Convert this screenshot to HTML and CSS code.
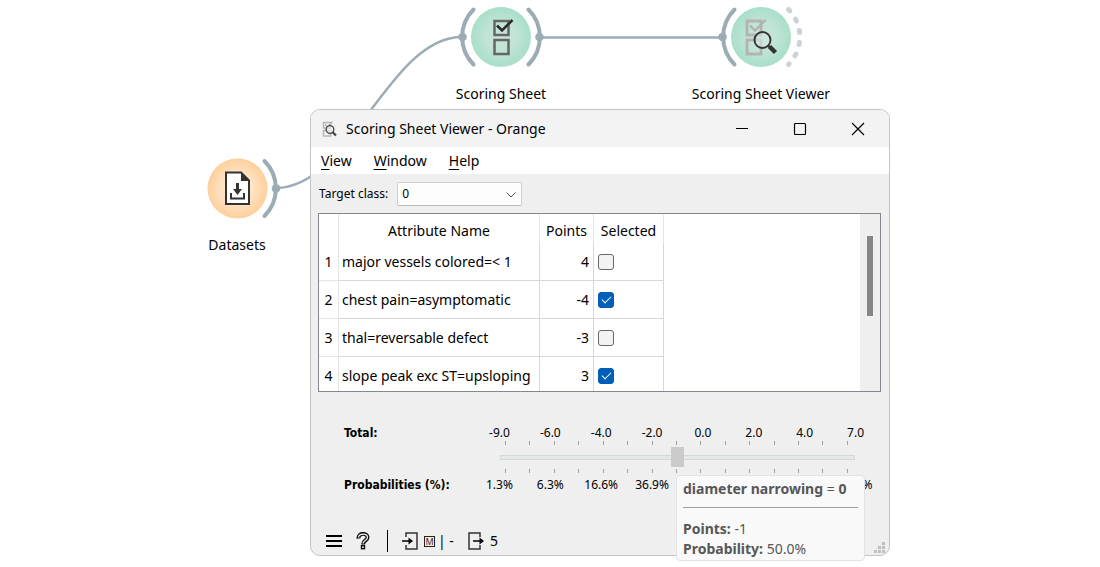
FILE: index.html
```html
<!DOCTYPE html>
<html lang="en">
<head>
<meta charset="utf-8">
<title>Scoring Sheet Viewer - Orange</title>
<link rel="stylesheet" href="styles.css">
</head>
<body>
<main class="canvas">
  <svg class="links" aria-hidden="true">
    <path d="M276 188C350 188 388 37 462 37"/>
    <path d="M540 37.500H722"/>
  </svg>

  <div class="node node-datasets">
    <svg class="node-art" viewBox="0 0 88 74" aria-hidden="true">
      <defs>
        <radialGradient id="orange"><stop offset="0" stop-color="#ffeedd"/><stop offset=".5" stop-color="#ffe3c5"/><stop offset="1" stop-color="#ffcf9b"/></radialGradient>
      </defs>
      <circle cx="44.500" cy="37.500" r="30" fill="url(#orange)"/>
      <path class="arc" d="M71.500 10A39 39 0 0 1 71.500 65"/>
      <circle class="anchor" cx="83" cy="37.500" r="4.300"/>
      <path d="M33 21.500H48L56 29.500V53H33Z" fill="#fff" stroke="#333" stroke-width="2"/>
      <path d="M48 20.500V30H57Z" fill="#333"/>
      <path d="M44.500 32V39" stroke="#333" stroke-width="3"/>
      <path d="M40 38H49L44.500 44Z" fill="#333"/>
      <path d="M38 42V47.500H51V42" fill="none" stroke="#333" stroke-width="2"/>
    </svg>
    <span class="node-label">Datasets</span>
  </div>

  <div class="node node-sheet">
    <svg class="node-art" viewBox="0 0 88 74" aria-hidden="true">
      <defs>
        <radialGradient id="green"><stop offset="0" stop-color="#cbe5da"/><stop offset=".5" stop-color="#c0e4d5"/><stop offset="1" stop-color="#a8dfc9"/></radialGradient>
      </defs>
      <circle cx="44" cy="37" r="30" fill="url(#green)"/>
      <path class="arc" d="M16.500 9.500A39 39 0 0 0 16.500 64.500M71.500 9.500A39 39 0 0 1 71.500 64.500"/>
      <circle class="anchor" cx="5.500" cy="37" r="4.300"/>
      <circle class="anchor" cx="82.500" cy="37" r="4.300"/>
      <path d="M37.500 21H51.500V35H37.500ZM37.500 40H51.500V54H37.500Z" fill="none" stroke="#666" stroke-width="2.500"/>
      <path d="M40 25.500L45 30.500L55.500 20" fill="none" stroke="#2b2b2b" stroke-width="2.600"/>
    </svg>
    <span class="node-label">Scoring Sheet</span>
  </div>

  <div class="node node-viewer">
    <svg class="node-art" viewBox="0 0 88 74" aria-hidden="true">
      <circle cx="44" cy="37" r="30" fill="url(#green)"/>
      <path class="arc" d="M17.500 9.500A39 39 0 0 0 17.500 64.500"/>
      <circle class="anchor" cx="5.500" cy="37" r="4.300"/>
      <path class="arc-open" d="M71.500 9.500A39 39 0 0 1 71.500 64.500"/>
      <path d="M30 21H44V35H30ZM30 40H44V54H30Z" fill="none" stroke="#b3b3b3" stroke-width="2.800"/>
      <path d="M33 25.500L38 30.500L48.500 20" fill="none" stroke="#b3b3b3" stroke-width="2.400"/>
      <circle cx="45.500" cy="40" r="8" fill="#d3e7df" fill-opacity=".6" stroke="#333" stroke-width="1.900"/>
      <path d="M51 45.500L53 47.500" stroke="#333" stroke-width="2"/>
      <path d="M52.500 46.500L58.500 52.500" stroke="#333" stroke-width="4.500"/>
    </svg>
    <span class="node-label">Scoring Sheet Viewer</span>
  </div>

  <section class="window" aria-label="Scoring Sheet Viewer - Orange">
    <header class="titlebar">
      <svg class="app-icon" viewBox="0 0 16 18" aria-hidden="true">
        <path d="M1.500 2.500H8.500V8H1.500ZM1.500 10.500H8.500V16H1.500Z" fill="none" stroke="#b8b8b8" stroke-width="1.600"/>
        <path d="M3 4.500L5.500 7L10.500 1.500" fill="none" stroke="#b0b0b0" stroke-width="1.200"/>
        <circle cx="8" cy="9.500" r="3.800" fill="#eee" fill-opacity=".7" stroke="#444" stroke-width="1.300"/>
        <path d="M10.500 12L14 15.500" stroke="#444" stroke-width="2.200"/>
      </svg>
      <h1 class="title">Scoring Sheet Viewer - Orange</h1>
      <div class="window-controls">
        <button class="window-button" type="button" aria-label="Minimize"><svg viewBox="0 0 12 12"><path d="M0 5.500H12"/></svg></button>
        <button class="window-button" type="button" aria-label="Maximize"><svg viewBox="0 0 12 12"><rect x=".5" y=".5" width="11" height="11" rx="1"/></svg></button>
        <button class="window-button" type="button" aria-label="Close"><svg viewBox="0 0 12 12"><path d="M0 0L12 12M12 0L0 12"/></svg></button>
      </div>
    </header>

    <nav class="menubar">
      <button class="menu-item" type="button"><u>V</u>iew</button>
      <button class="menu-item" type="button"><u>W</u>indow</button>
      <button class="menu-item" type="button"><u>H</u>elp</button>
    </nav>

    <div class="target-row">
      <label for="target">Target class:</label>
      <span class="select-wrap">
        <select id="target" class="target-select"><option>0</option><option>1</option></select>
        <svg class="chevron" viewBox="0 0 10 6" aria-hidden="true"><path d="M.5 .5L5 5L9.500 .5"/></svg>
      </span>
    </div>

    <div class="table-frame">
      <div class="table-view">
        <table class="sheet">
          <colgroup><col class="col-index"><col class="col-name"><col class="col-points"><col class="col-selected"></colgroup>
          <thead>
            <tr><th></th><th scope="col">Attribute Name</th><th scope="col">Points</th><th scope="col">Selected</th></tr>
          </thead>
          <tbody>
            <tr><th scope="row">1</th><td>major vessels colored=&lt; 1</td><td class="points">4</td><td><input class="check" type="checkbox" aria-label="Select major vessels colored"></td></tr>
            <tr><th scope="row">2</th><td>chest pain=asymptomatic</td><td class="points">-4</td><td><input class="check" type="checkbox" aria-label="Select chest pain" checked></td></tr>
            <tr><th scope="row">3</th><td>thal=reversable defect</td><td class="points">-3</td><td><input class="check" type="checkbox" aria-label="Select thal"></td></tr>
            <tr><th scope="row">4</th><td>slope peak exc ST=upsloping</td><td class="points">3</td><td><input class="check" type="checkbox" aria-label="Select slope peak exc ST" checked></td></tr>
          </tbody>
        </table>
      </div>
      <div class="scrollbar"><div class="scroll-thumb"></div></div>
    </div>

    <div class="score">
      <label class="score-label" for="total">Total:</label>
      <div class="scale"><span>-9.0</span><span>-6.0</span><span>-4.0</span><span>-2.0</span><span>0.0</span><span>2.0</span><span>4.0</span><span>7.0</span></div>
      <div class="slider-area">
        <div class="ticks"><i></i><i></i><i></i><i></i><i></i><i></i><i></i><i></i><i></i><i></i><i></i><i></i><i></i><i></i><i></i></div>
        <input id="total" class="slider" type="range" min="-9" max="7" value="-1">
        <div class="ticks"><i></i><i></i><i></i><i></i><i></i><i></i><i></i><i></i><i></i><i></i><i></i><i></i><i></i><i></i><i></i></div>
      </div>
      <span class="score-label">Probabilities (%):</span>
      <div class="scale"><span>1.3%</span><span>6.3%</span><span>16.6%</span><span>36.9%</span><span></span><span></span><span></span><span>98.7%</span></div>
    </div>

    <footer class="statusbar">
      <button class="status-button" type="button" aria-label="Menu"><svg width="16" height="14" viewBox="0 0 16 14"><path d="M0 2H16M0 7H16M0 12H16" stroke="#000" stroke-width="2"/></svg></button>
      <button class="status-button" type="button" aria-label="Help"><svg width="14" height="18" viewBox="0 0 14 18"><path d="M2.500 6.500C2 .5 11.500 .5 11.500 5.500C11.500 8.500 7 8.500 7 12.500" fill="none" stroke="#111" stroke-width="4"/><path d="M2.500 5.500C3 1 11.500 1 11.500 5.500C11.500 8.500 7 8.500 7 11.500" fill="none" stroke="#efefef" stroke-width="1.300"/><rect x="5.500" y="13.700" width="3" height="3" fill="#efefef" stroke="#111" stroke-width="1.400"/></svg></button>
      <span class="divider"></span>
      <button class="status-button" type="button" aria-label="Input"><svg width="16" height="18" viewBox="0 0 16 18"><path d="M4 5V1H15V17H4V13" fill="none" stroke="#333" stroke-width="1.500"/><path d="M0 9H8" stroke="#000" stroke-width="1.500"/><path d="M6.500 5.500L11 9L6.500 12.500Z"/></svg><span class="input-summary"><span class="model-badge">M</span><span>| -</span></span></button>
      <button class="status-button" type="button" aria-label="Output"><svg width="16" height="18" viewBox="0 0 16 18"><path d="M12 5V1H1V17H12V13" fill="none" stroke="#333" stroke-width="1.500"/><path d="M5 9H13" stroke="#000" stroke-width="1.500"/><path d="M11.500 5.500L16 9L11.500 12.500Z"/></svg><span>5</span></button>
      <svg class="grip" viewBox="0 0 11 11" aria-hidden="true"><path d="M8 0h3v3h-3zM4 4h3v3h-3zM8 4h3v3h-3zM0 8h3v3h-3zM4 8h3v3h-3zM8 8h3v3h-3z"/></svg>
    </footer>
  </section>

  <aside class="tooltip" role="tooltip">
    <p class="tooltip-title"><b>diameter narrowing</b> = <b>0</b></p>
    <p><b>Points:</b> -1</p>
    <p><b>Probability:</b> 50.0%</p>
  </aside>
</main>
</body>
</html>
```
FILE: styles.css
```css
* { box-sizing: border-box; }
body { margin: 0; background: #fff; color: #000; font: 14px/20px "Noto Sans", "Open Sans", sans-serif; }
button { border: 0; padding: 0; background: none; color: inherit; font: inherit; }
h1, p { margin: 0; font: inherit; }

.canvas { position: relative; min-height: 100vh; overflow: hidden; }
.links { position: absolute; inset: 0; width: 100%; height: 100%; fill: none; stroke: #9cacb5; stroke-width: 2.5px; }

/* Workflow nodes */
.node { position: absolute; width: 160px; display: flex; flex-direction: column; align-items: center; gap: 10px; }
.node-datasets { left: 157px; top: 151px; }
.node-sheet { left: 421px; top: 0; }
.node-viewer { left: 681px; top: 0; }
.node-art { width: 88px; height: 74px; }
.node-label { white-space: nowrap; }
.arc, .arc-open { fill: none; stroke: #9cacb5; stroke-width: 4px; stroke-linecap: round; }
.arc-open { stroke: #ccd3d8; stroke-dasharray: 2 10; stroke-width: 5px; }
.anchor { fill: #9cacb5; }

/* Window */
.window { position: absolute; left: 310px; top: 109px; width: 580px; border: 1px solid #c4c4c4; border-radius: 10px; background: #efefef; overflow: hidden; }
.titlebar { display: flex; align-items: center; height: 37px; padding: 0 2px 0 11px; background: #f3f3f3; }
.app-icon { width: 16px; height: 18px; }
.title { flex: 1; padding-left: 8px; }
.window-controls { display: flex; }
.window-button { width: 58px; height: 36px; display: grid; place-items: center; }
.window-button svg { width: 12px; height: 12px; fill: none; stroke: #000; stroke-width: 1.2px; overflow: visible; }
.menubar { display: flex; gap: 22px; height: 27px; padding: 0 10px; background: #fff; }
.menu-item u { text-underline-offset: 3px; text-decoration-thickness: 1px; }

.target-row { display: flex; align-items: center; gap: 9px; padding: 8px 8px 7px; font-size: 12px; }
.select-wrap { position: relative; display: flex; width: 125px; }
.target-select { appearance: none; width: 100%; height: 24px; padding: 0 4px; border: 1px solid #d0d0d0; border-bottom-color: #bbb; border-radius: 2px; background: #fdfdfd; color: #000; font: inherit; }
.chevron { position: absolute; right: 6px; top: 10px; width: 10px; height: 6px; fill: none; stroke: #555; pointer-events: none; }

/* Attribute table */
.table-frame { display: flex; height: 179px; margin: 0 8px 0 7px; border: 1px solid #828790; background: #fff; }
.table-view { flex: 1; overflow: hidden; }
.sheet { table-layout: fixed; width: 345px; border-collapse: separate; border-spacing: 0; }
.col-index { width: 20px; }
.col-name { width: 201px; }
.col-points { width: 54px; }
.col-selected { width: 70px; }
.sheet th, .sheet td { padding: 0 3px; border-right: 1px solid #d8d8d8; font-weight: 400; white-space: nowrap; }
.sheet thead th { height: 29px; padding: 4px 0 0; border-color: #e5e5e5; }
.sheet tbody th, .sheet tbody td { height: 38px; border-bottom: 1px solid #d8d8d8; }
.sheet tbody th { padding: 0; border-color: #e5e5e5; }
.sheet td { text-align: left; }
.sheet td:last-child { padding-left: 4px; }
.sheet .points { padding-right: 4px; text-align: right; }
.check { appearance: none; display: block; width: 16px; height: 16px; margin: 0; border: 1px solid #666; border-radius: 3px; background: #f3f3f3; }
.check:checked { display: grid; place-items: center; border-color: #005fb8; background: #005fb8; }
.check:checked::before { content: ""; width: 8px; height: 4px; margin-bottom: 2px; border: solid #fff; border-width: 0 0 1px 1px; rotate: -45deg; }
.scrollbar { width: 20px; padding: 22px 6px 0 7px; background: #efefef; }
.scroll-thumb { width: 6px; height: 80px; background: #868686; }

/* Score slider */
.score { display: grid; grid-template-columns: 130px 1fr; margin: 31px 8px 0 33px; font-size: 12px; }
.score-label { font-family: "DejaVu Sans Condensed", "DejaVu Sans", sans-serif; font-weight: 700; }
.scale { display: grid; grid-template-columns: repeat(8, 1fr); text-align: center; }
.slider-area { grid-column: 2; padding: 0 26px 0 26px; margin-top: -2px; padding-bottom: 2px; }
.ticks { display: flex; justify-content: space-between; height: 4px; padding: 0 7px 0 5px; }
.ticks i { width: 1px; background: #a5a294; }
.slider { appearance: none; display: block; width: 100%; height: 24px; margin: 0; background: none; }
.slider::-webkit-slider-runnable-track { height: 5px; border: 1px solid #d5d8d8; background: #e4e8e7; }
.slider::-webkit-slider-thumb { appearance: none; width: 13px; height: 20px; margin-top: -9px; background: #cbcbcb; }

/* Status bar */
.statusbar { display: flex; align-items: center; height: 28px; margin-top: 32px; padding: 0 4px 0 15px; }
.status-button { display: flex; align-items: center; gap: 6px; margin-right: 14px; }
.divider { width: 1px; height: 22px; margin: 0 14px 0 3px; background: #000; }
.input-summary { display: flex; align-items: center; gap: 3px; }
.model-badge { width: 11px; height: 11px; border: 1px solid #222; background: #fde8d2; color: #335; font-size: 9px; line-height: 9px; text-align: center; }
.grip { width: 11px; height: 11px; margin: 12px 0 0 auto; fill: #bfbfbf; }

.tooltip { position: absolute; left: 676px; top: 475px; width: 189px; padding: 3px 6px 1px; border: 1px solid #e3e3e3; border-radius: 4px; background: #f9f9f9; color: #575757; white-space: nowrap; }
.tooltip-title { margin-bottom: 11px; padding-bottom: 8px; border-bottom: 1px solid #a0a0a0; }
```
